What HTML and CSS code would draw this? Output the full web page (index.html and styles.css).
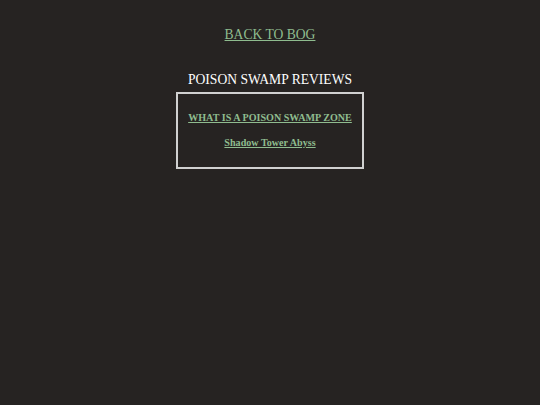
FILE: index.html
```html
<!DOCTYPE html>
<html>
<head>
<meta charset="utf-8">
<link rel="stylesheet" href="styles.css">
</head>
<body>
<div class="page">
  <a class="back" href="#">BACK TO BOG</a>
  <h2 class="title">POISON SWAMP REVIEWS</h2>
  <div class="box">
    <a class="item" href="#">WHAT IS A POISON SWAMP ZONE</a>
    <a class="item" href="#">Shadow Tower Abyss</a>
  </div>
</div>
</body>
</html>
```
FILE: styles.css
```css
html, body {
  margin: 0;
  padding: 0;
  background: #262322;
}
body {
  font-family: "Liberation Serif", "Times New Roman", serif;
  color: #ffffff;
}
.page {
  display: flex;
  flex-direction: column;
  align-items: center;
  padding-top: 27px;
}
.back {
  font-size: 13.6px;
  line-height: 16px;
  color: #8fbc8f;
  text-decoration: underline;
}
.title {
  font-size: 13.6px;
  line-height: 16px;
  font-weight: normal;
  margin: 29px 0 4px 0;
  color: #ffffff;
}
.box {
  width: 184px;
  height: 55px;
  border: 2px solid #d0d0d0;
  display: flex;
  flex-direction: column;
  align-items: center;
  gap: 13px;
  padding-top: 18px;
}
.item {
  font-size: 10.1px;
  line-height: 12px;
  font-weight: bold;
  color: #8fbc8f;
  text-decoration: underline;
}
```
